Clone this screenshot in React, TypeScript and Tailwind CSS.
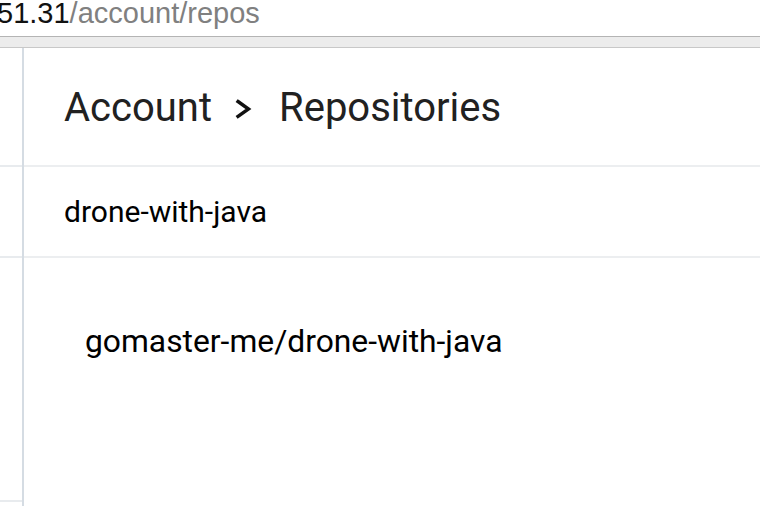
export default function App() {
  return (
    <div className="w-[760px] h-[506px] overflow-hidden bg-white font-['Roboto',sans-serif]">
      {/* browser address bar */}
      <div className="h-[37px] flex items-center border-b border-[#b4b4b4] overflow-hidden">
        <p className="whitespace-nowrap text-[29px] leading-none -mt-[10px] -ml-[3px] font-['Liberation_Sans',sans-serif]">
          <span className="text-[#111]">51.31</span>
          <span className="text-[#808080]">/account/repos</span>
        </p>
      </div>
      <div className="h-[10px] bg-[#ececec] border-b border-[#c8c8c8] box-content" />

      <div className="flex h-[458px]">
        {/* sidebar */}
        <aside className="w-[24px] flex flex-col border-r-2 border-[#d5dce3]">
          <div className="h-[119px] border-b-2 border-[#e8ebee]" />
          <div className="h-[91px] border-b-2 border-[#e8ebee]" />
          <div className="h-[244px] border-b-2 border-[#e8ebee]" />
        </aside>

        {/* main */}
        <main className="flex-1 flex flex-col">
          <header className="h-[119px] border-b-2 border-[#eceef0] flex items-center pl-[40px]">
            <h1 className="flex items-center text-[40px] text-[#212121] leading-none pt-[2px]">
              <span>Account</span>
              <svg
                className="ml-[23px] mr-[27px] mt-[2px]"
                width="17"
                height="20"
                viewBox="0 0 17 20"
                fill="none"
                stroke="#111"
                strokeWidth="3.4"
                strokeLinecap="square"
              >
                <path d="M3 2.5 L13.5 10 L3 17.5" />
              </svg>
              <span>Repositories</span>
            </h1>
          </header>

          <div className="h-[91px] border-b-2 border-[#eceef0] flex items-center pl-[40px]">
            <span className="text-[30px] text-black leading-none">
              drone-with-java
            </span>
          </div>

          <div className="pl-[61px] pt-[68px]">
            <span className="text-[31.8px] text-black leading-none">
              gomaster-me/drone-with-java
            </span>
          </div>
        </main>
      </div>
    </div>
  );
}
